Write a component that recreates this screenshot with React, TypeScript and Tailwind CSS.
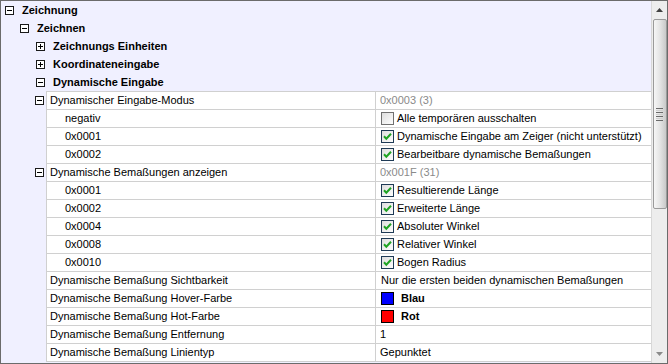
import React from "react";

type RowT =
  | { kind: "cat"; level: number; expanded: boolean; text: string }
  | { kind: "prop"; label: string; toggle?: boolean; sub?: boolean; value: React.ReactNode };

function Toggle({ expanded }: { expanded: boolean }) {
  return (
    <svg width="9" height="9" viewBox="0 0 9 9" className="shrink-0">
      <rect x="0.5" y="0.5" width="8" height="8" fill="#ffffff" stroke="#1a1a1a" />
      <line x1="2" y1="4.5" x2="7" y2="4.5" stroke="#000" />
      {!expanded && <line x1="4.5" y1="2" x2="4.5" y2="7" stroke="#000" />}
    </svg>
  );
}

function Check({ checked, label }: { checked: boolean; label: string }) {
  return (
    <div className="flex items-center pl-[5px]">
      <svg width="13" height="13" viewBox="0 0 13 13" className="shrink-0">
        <defs>
          <linearGradient id="cbg" x1="0" y1="0" x2="1" y2="1">
            <stop offset="0" stopColor="#dcdcdc" />
            <stop offset="1" stopColor="#ffffff" />
          </linearGradient>
        </defs>
        <rect x="0.5" y="0.5" width="12" height="12" fill="url(#cbg)" stroke={checked ? "#1e3a55" : "#707070"} />
        {checked && (
          <path d="M3 6.3 L5.3 8.7 L10 3.8" fill="none" stroke="#1fa323" strokeWidth="2" />
        )}
      </svg>
      <span className="ml-[3px] text-black">{label}</span>
    </div>
  );
}

function Swatch({ color, label }: { color: string; label: string }) {
  return (
    <div className="flex items-center pl-[5px]">
      <span className="w-[13px] h-[13px] border border-black shrink-0" style={{ background: color }} />
      <span className="ml-[7px] font-bold text-black">{label}</span>
    </div>
  );
}

const rows: RowT[] = [
  { kind: "cat", level: 0, expanded: true, text: "Zeichnung" },
  { kind: "cat", level: 1, expanded: true, text: "Zeichnen" },
  { kind: "cat", level: 2, expanded: false, text: "Zeichnungs Einheiten" },
  { kind: "cat", level: 2, expanded: false, text: "Koordinateneingabe" },
  { kind: "cat", level: 2, expanded: true, text: "Dynamische Eingabe" },
  { kind: "prop", label: "Dynamischer Eingabe-Modus", toggle: true, value: <span className="pl-[4px] text-[#8a8a8a]">0x0003 (3)</span> },
  { kind: "prop", label: "negativ", sub: true, value: <Check checked={false} label="Alle temporären ausschalten" /> },
  { kind: "prop", label: "0x0001", sub: true, value: <Check checked label="Dynamische Eingabe am Zeiger (nicht unterstützt)" /> },
  { kind: "prop", label: "0x0002", sub: true, value: <Check checked label="Bearbeitbare dynamische Bemaßungen" /> },
  { kind: "prop", label: "Dynamische Bemaßungen anzeigen", toggle: true, value: <span className="pl-[4px] text-[#8a8a8a]">0x001F (31)</span> },
  { kind: "prop", label: "0x0001", sub: true, value: <Check checked label="Resultierende Länge" /> },
  { kind: "prop", label: "0x0002", sub: true, value: <Check checked label="Erweiterte Länge" /> },
  { kind: "prop", label: "0x0004", sub: true, value: <Check checked label="Absoluter Winkel" /> },
  { kind: "prop", label: "0x0008", sub: true, value: <Check checked label="Relativer Winkel" /> },
  { kind: "prop", label: "0x0010", sub: true, value: <Check checked label="Bogen Radius" /> },
  { kind: "prop", label: "Dynamische Bemaßung Sichtbarkeit", value: <span className="pl-[5px]">Nur die ersten beiden dynamischen Bemaßungen</span> },
  { kind: "prop", label: "Dynamische Bemaßung Hover-Farbe", value: <Swatch color="#0000ff" label="Blau" /> },
  { kind: "prop", label: "Dynamische Bemaßung Hot-Farbe", value: <Swatch color="#ff0000" label="Rot" /> },
  { kind: "prop", label: "Dynamische Bemaßung Entfernung", value: <span className="pl-[4px]">1</span> },
  { kind: "prop", label: "Dynamische Bemaßung Linientyp", value: <span className="pl-[4px]">Gepunktet</span> },
];

const catPad = ["pl-[4px]", "pl-[19px]", "pl-[35px]"];

function Row({ r }: { r: RowT }) {
  if (r.kind === "cat") {
    return (
      <div className={`h-[18px] flex items-center ${catPad[r.level]}`}>
        <Toggle expanded={r.expanded} />
        <span className="ml-[8px] font-bold text-black">{r.text}</span>
      </div>
    );
  }
  return (
    <div className="h-[18px] flex">
      <div className="w-[45px] shrink-0 flex items-center pl-[34px]">
        {r.toggle && <Toggle expanded />}
      </div>
      <div className="flex-1 flex bg-white border-t border-l border-[#d0d0d0]">
        <div className={`w-[329px] shrink-0 flex items-center border-r border-[#d0d0d0] ${r.sub ? "pl-[18px]" : "pl-[3px]"}`}>
          <span className="text-black">{r.label}</span>
        </div>
        <div className="flex-1 flex items-center text-black">{r.value}</div>
      </div>
    </div>
  );
}

function Scrollbar() {
  return (
    <div className="w-[16px] shrink-0 bg-[#ededed] border-l border-[#d8d8d8] flex flex-col items-center">
      <div className="h-[18px] w-full flex items-center justify-center">
        <svg width="7" height="4" viewBox="0 0 7 4"><path d="M0 4 L3.5 0 L7 4 Z" fill="#404040" /></svg>
      </div>
      <div className="h-[190px] w-[14px] rounded-[2px] border border-[#9a9a9a] bg-gradient-to-r from-[#f6f6f6] via-[#e4e4e4] to-[#c9c9c9] flex items-center justify-center">
        <div className="flex flex-col gap-[1px] w-[7px]">
          <div className="h-[1px] bg-[#6a6a6a]" />
          <div className="h-[1px] bg-[#cfcfcf]" />
          <div className="h-[1px] bg-[#6a6a6a]" />
          <div className="h-[1px] bg-[#cfcfcf]" />
          <div className="h-[1px] bg-[#6a6a6a]" />
          <div className="h-[1px] bg-[#cfcfcf]" />
          <div className="h-[1px] bg-[#6a6a6a]" />
        </div>
      </div>
      <div className="flex-1" />
      <div className="h-[18px] w-full flex items-center justify-center">
        <svg width="7" height="4" viewBox="0 0 7 4"><path d="M0 0 L3.5 4 L7 0 Z" fill="#8a8a8a" /></svg>
      </div>
    </div>
  );
}

export default function App() {
  return (
    <div
      className="w-[668px] h-[364px] border border-[#6b6b6b] bg-[#f0f0ff] flex overflow-hidden text-[11px] leading-none"
      style={{ fontFamily: '"Liberation Sans", Arial, sans-serif' }}
    >
      <div className="flex-1 flex flex-col">
        {rows.map((r, i) => (
          <Row key={i} r={r} />
        ))}
        <div className="h-[2px] flex">
          <div className="w-[45px]" />
          <div className="flex-1 border-t border-[#d0d0d0]" />
        </div>
      </div>
      <Scrollbar />
    </div>
  );
}
